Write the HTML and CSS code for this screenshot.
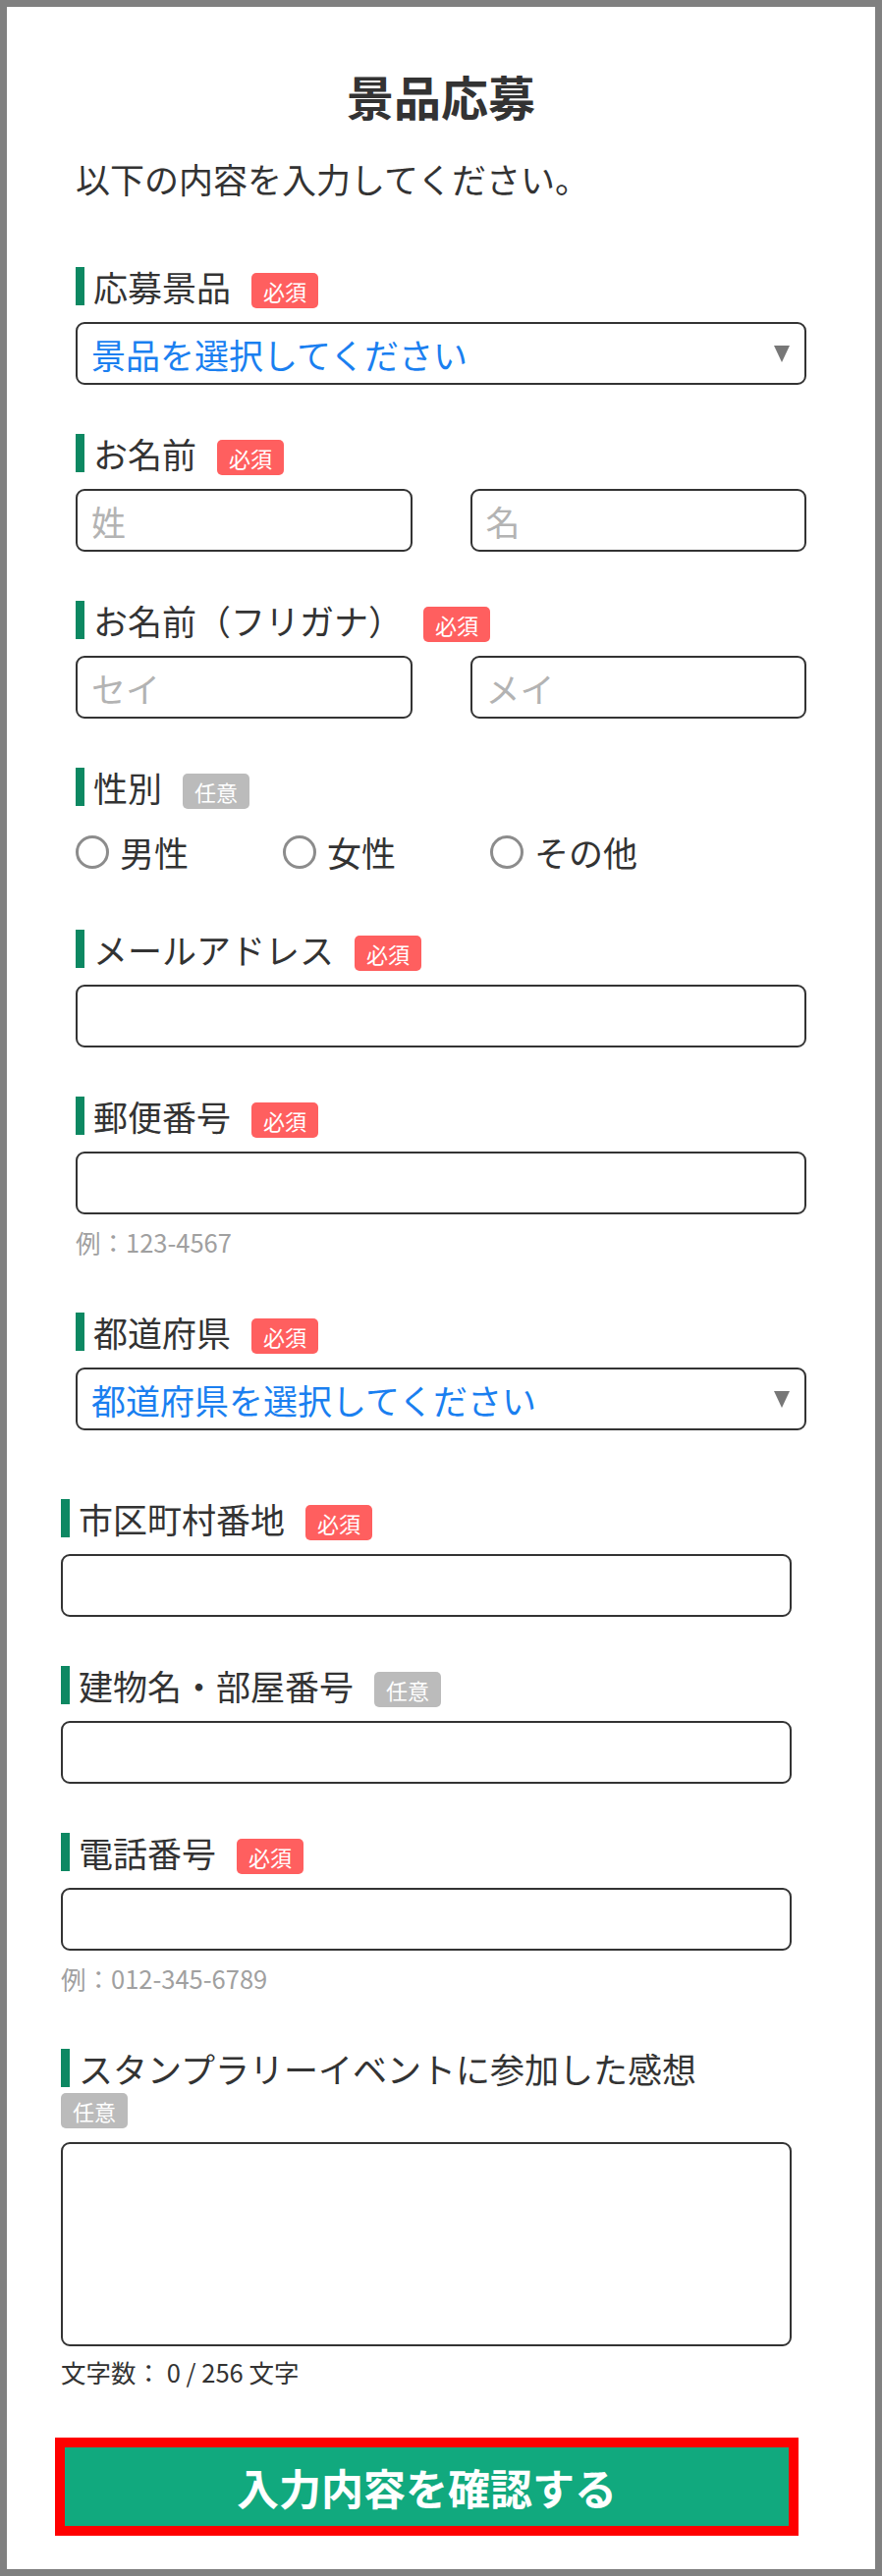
FILE: index.html
```html
<!DOCTYPE html>
<html lang="ja">
<head>
    <meta charset="UTF-8">
    <title>景品応募</title>

    <link rel="stylesheet" href="styles.css">
</head>
<body>
<div class="page">

    <h1 class="title">景品応募</h1>
    <p class="lead">以下の内容を入力してください。</p>

    <form class="form">
        <div class="field">
            <div class="label-row">
                <span class="label">応募景品</span>
                <span class="badge req">必須</span>
            </div>
            <div class="select-wrap">
                <select class="select">
                    <option>景品を選択してください</option>
                </select>
            </div>
        </div>

        <div class="field">
            <div class="label-row">
                <span class="label">お名前</span>
                <span class="badge req">必須</span>
            </div>
            <div class="pair">
                <input class="input" type="text" placeholder="姓"/>
                <input class="input" type="text" placeholder="名"/>
            </div>
        </div>

        <div class="field">
            <div class="label-row">
                <span class="label">お名前（フリガナ）</span>
                <span class="badge req">必須</span>
            </div>
            <div class="pair">
                <input class="input" type="text" placeholder="セイ"/>
                <input class="input" type="text" placeholder="メイ"/>
            </div>
        </div>

        <div class="field">
            <div class="label-row">
                <span class="label">性別</span>
                <span class="badge opt">任意</span>
            </div>
            <div class="radios">
                <label class="radio"><input type="radio" name="sex" value="0"/>男性</label>
                <label class="radio"><input type="radio" name="sex" value="1"/>女性</label>
                <label class="radio"><input type="radio" name="sex" value="2"/>その他</label>
            </div>
        </div>

        <div class="field">
            <div class="label-row">
                <span class="label">メールアドレス</span>
                <span class="badge req">必須</span>
            </div>
            <input class="input" type="email"/>
        </div>

        <div class="field">
            <div class="label-row">
                <span class="label">郵便番号</span>
                <span class="badge req">必須</span>
            </div>
            <input class="input" type="text"/>
            <p class="hint">例：123-4567</p>
        </div>

        <div class="field">
            <div class="label-row">
                <span class="label">都道府県</span>
                <span class="badge req">必須</span>
            </div>
            <div class="select-wrap">
                <select class="select">
                    <option>都道府県を選択してください</option>
                </select>
            </div>
        </div>

        <div class="lower">
            <div class="field">
                <div class="label-row">
                    <span class="label">市区町村番地</span>
                    <span class="badge req">必須</span>
                </div>
                <input class="input" type="text"/>
            </div>

            <div class="field">
                <div class="label-row">
                    <span class="label">建物名・部屋番号</span>
                    <span class="badge opt">任意</span>
                </div>
                <input class="input" type="text"/>
            </div>

            <div class="field">
                <div class="label-row">
                    <span class="label">電話番号</span>
                    <span class="badge req">必須</span>
                </div>
                <input class="input" type="tel"/>
                <p class="hint">例：012-345-6789</p>
            </div>

            <div class="field last">
                <div class="label-row wrap">
                    <span class="label">スタンプラリーイベントに参加した感想</span>
                    <span class="badge opt">任意</span>
                </div>
                <textarea class="textarea"></textarea>
                <p class="count">文字数： 0 / 256 文字</p>
            </div>

            <button class="submit" type="button">入力内容を確認する</button>
        </div>
    </form>

</div>
</body>
</html>
```

FILE: styles.css
```css
* {
    margin: 0;
    padding: 0;
    box-sizing: border-box;
}

body {
    width: 898px;
    font-family: "Noto Sans CJK JP", "Noto Sans", sans-serif;
    color: #333;
    background: #808080;
}

.page {
    border: 7px solid #808080;
    background: #fff;
    min-height: 2624px;
    padding: 60px 70px 34px;
}

.title {
    font-size: 48px;
    font-weight: bold;
    line-height: 60px;
    text-align: center;
}

.lead {
    font-size: 35px;
    line-height: 50px;
    margin-top: 30px;
}

.form {
    margin-top: 65px;
}

.field {
    margin-bottom: 50px;
}

.field.last {
    margin-bottom: 0;
}

.label-row {
    display: flex;
    align-items: flex-start;
    margin-bottom: 14px;
}

.label-row.wrap {
    flex-wrap: wrap;
}

.label {
    border-left: 9px solid #0d8862;
    padding-left: 9px;
    font-size: 35px;
    line-height: 39px;
    color: #333;
}

.label-row.wrap .label {
    width: 100%;
}

.badge {
    margin-left: 21px;
    margin-top: 6px;
    height: 36px;
    line-height: 36px;
    padding: 0 12px;
    font-size: 22px;
    color: #fff;
    border-radius: 5px;
}

.label-row.wrap .badge {
    margin-left: 0;
}

.req {
    background: #ff5f5f;
}

.opt {
    background: #bbbbbb;
}

.input,
.select,
.textarea {
    display: block;
    width: 100%;
    height: 64px;
    border: 2px solid #333;
    border-radius: 9px;
    background: #fff;
    padding: 0 14px;
    font-family: inherit;
    font-size: 35px;
    color: #333;
    outline: none;
}

.input::placeholder {
    color: #b3b3b3;
}

.select-wrap {
    position: relative;
}

.select {
    appearance: none;
    -webkit-appearance: none;
    color: #1a7ff0;
}

.select-wrap::after {
    content: "";
    position: absolute;
    right: 17px;
    top: 24px;
    border-left: 8.5px solid transparent;
    border-right: 8.5px solid transparent;
    border-top: 17px solid #777;
}

.pair {
    display: grid;
    grid-template-columns: 1fr 1fr;
    column-gap: 59px;
}

.radios {
    display: flex;
    align-items: center;
    height: 59px;
}

.radio {
    display: flex;
    align-items: center;
    width: 211px;
    font-size: 35px;
    color: #333;
}

.radio input {
    appearance: none;
    -webkit-appearance: none;
    width: 34px;
    height: 34px;
    border: 3px solid #8c8c8c;
    border-radius: 50%;
    margin-right: 11px;
}

.hint {
    padding-top: 10px;
    padding-bottom: 4px;
    font-size: 25.5px;
    line-height: 36px;
    color: #a0a0a0;
}

.lower {
    padding-top: 20px;
    margin: 0 15px 0 -15px;
}

.textarea {
    height: 208px;
    resize: none;
}

.count {
    margin-top: 8px;
    font-size: 25.5px;
    line-height: 36px;
    color: #333;
}

.submit {
    display: block;
    width: calc(100% + 13px);
    height: 100px;
    margin: 49px -7px 0 -6px;
    border: 10px solid #ff0000;
    background: #11a97e;
    color: #fff;
    font-family: inherit;
    font-size: 43px;
    font-weight: bold;
}
```
